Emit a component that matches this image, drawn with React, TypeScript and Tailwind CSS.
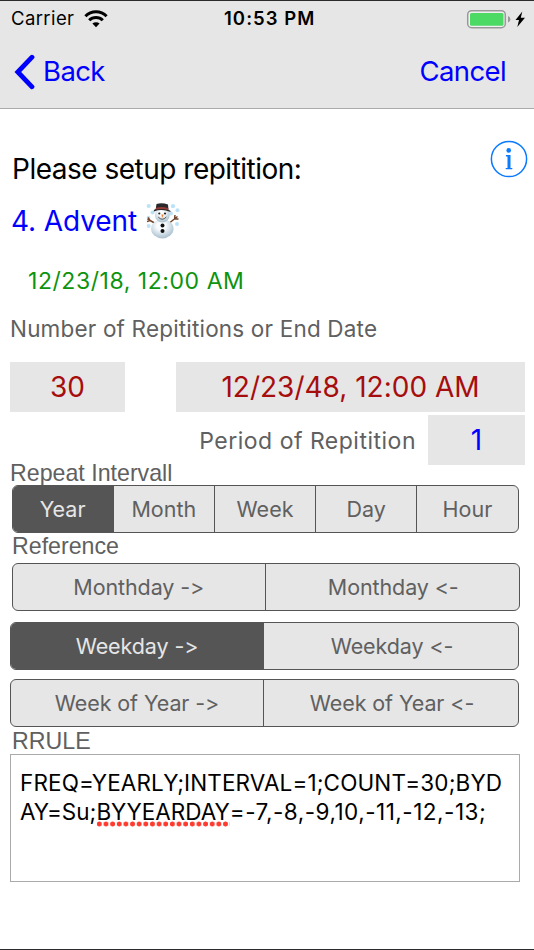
import React from 'react';

const intervals = ['Year', 'Month', 'Week', 'Day', 'Hour'];

const WifiIcon = () => (
  <svg width="24" height="18" viewBox="0 0 24 18" fill="none" stroke="#000" strokeWidth="3">
    <path d="M1.4 6.2 A15 15 0 0 1 22.6 6.2" />
    <path d="M5.2 10.3 A9.6 9.6 0 0 1 18.8 10.3" />
    <path d="M12 17.2 L8.4 13.6 A5.2 5.2 0 0 1 15.6 13.6 Z" fill="#000" stroke="none" />
  </svg>
);

const BatteryIcon = () => (
  <svg width="60" height="20" viewBox="0 0 60 20">
    <rect x="1.7" y="1.7" width="37.6" height="17" rx="4" fill="#f0f0f0" stroke="#999" strokeWidth="1.5" />
    <rect x="4" y="4" width="33.5" height="12.7" rx="1.5" fill="#4cd964" />
    <path d="M42 7 Q44.4 8 44.4 10.2 Q44.4 12.4 42 13.4 Z" fill="#999" />
    <path d="M56.3 2.5 L49.5 11 H53 L51.3 18 L59 8.7 H54.8 Z" fill="#000" />
  </svg>
);

const BackIcon = () => (
  <svg width="21" height="36" viewBox="0 0 21 36" fill="none" stroke="#0000ff" strokeWidth="4.8" strokeLinecap="round" strokeLinejoin="miter">
    <path d="M18 3.2 L3.8 18 L18 32.8" />
  </svg>
);

const InfoIcon = () => (
  <svg width="38" height="38" viewBox="0 0 38 38">
    <circle cx="19" cy="19" r="17.6" fill="none" stroke="#0a7aff" strokeWidth="1.5" />
    <circle cx="18.7" cy="10.4" r="2.3" fill="#0a7aff" />
    <path d="M15.9 15 H20.5 V28 H22.3 V29.2 H15.7 V28 H17.5 V16.4 H15.9 Z" fill="#0a7aff" />
  </svg>
);

const Snowman = () => (
  <svg width="34" height="36" viewBox="0 0 34 36">
    <defs>
      <radialGradient id="snow" cx="45%" cy="35%" r="65%">
        <stop offset="0.3" stopColor="#fafdff" />
        <stop offset="1" stopColor="#a9bfce" />
      </radialGradient>
    </defs>
    <g fill="#bde2f7">
      <circle cx="2.7" cy="3" r="2.1" />
      <circle cx="27" cy="3.2" r="2.1" />
      <circle cx="31.5" cy="7.2" r="2" />
      <circle cx="6.5" cy="9.5" r="2" />
      <circle cx="25" cy="10.5" r="2" />
      <circle cx="2.5" cy="14.5" r="1.8" />
      <circle cx="2.7" cy="23" r="2" />
      <circle cx="31" cy="21" r="2" />
    </g>
    <path d="M8.5 20 L1.5 16 M4 17.5 L2 14.5 M4 17.5 L1 18.5 M24 19.5 L31.5 13.5 M28.5 16 L29 12 M28.5 16 L32.5 16" fill="none" stroke="#74462f" strokeWidth="1.5" />
    <ellipse cx="16.3" cy="25.8" rx="11.2" ry="9.6" fill="url(#snow)" />
    <circle cx="16.3" cy="12" r="7.4" fill="url(#snow)" />
    <path d="M10.5 1 Q16 -0.5 22 1.5 L22.5 7 Q25 7.5 24.5 9 Q16 5.5 8 8.5 Q7 7 9.7 6 Z" fill="#29282b" />
    <path d="M10 4.8 Q16 3 22.3 5.2 V7 Q16 5 10 6.6 Z" fill="#953c35" />
    <circle cx="13.3" cy="10.5" r="1.1" fill="#222" />
    <circle cx="19" cy="10.5" r="1.1" fill="#222" />
    <path d="M15.3 11.5 H17.7 L16.2 15 Z" fill="#ee7b35" />
    <path d="M12.2 14 Q16.3 18.5 20.3 14" fill="none" stroke="#444" strokeWidth="0.9" />
    <circle cx="16.5" cy="22.6" r="2" fill="#111" />
    <circle cx="16.5" cy="28" r="2" fill="#111" />
  </svg>
);

type PairProps = { left: string; right: string; active?: boolean; className: string };

const PairControl = ({ left, right, active, className }: PairProps) => (
  <div className={`flex h-12 shrink-0 overflow-hidden rounded-md border-[1.5px] border-[#555] bg-[#e6e6e6] text-[21.5px] tracking-[-0.1px] text-[#606060] ${className}`}>
    <button className={active ? 'flex-1 border-r border-[#555] bg-[#555] text-[#e6e6e6]' : 'flex-1 border-r border-[#555]'}>
      {left}
    </button>
    <button className="flex-1 pl-[2px]">{right}</button>
  </div>
);

const App = () => {
  return (
    <div className="flex h-[950px] w-[534px] flex-col overflow-hidden whitespace-nowrap border-y border-[#2b2b2e] bg-white font-['Inter',sans-serif] [font-feature-settings:'calt'_0]">
      <header className="flex h-[108px] shrink-0 flex-col border-b border-[#aaa] bg-[#e6e6e6]">
        <div className="flex h-[35px] items-center">
          <div className="flex w-[224px] items-center pl-[11px]">
            <span className="w-[73px] text-[18.5px] tracking-[0.4px]">Carrier</span>
            <WifiIcon />
          </div>
          <span className="flex-1 text-[18.5px] font-semibold tracking-[1.05px]">10:53 PM</span>
          <div className="pr-[8px]">
            <BatteryIcon />
          </div>
        </div>
        <div className="flex h-[71px] items-center justify-between pl-[14px] pr-[28px] text-[27.5px] tracking-[-0.6px] text-[#0000ff]">
          <button className="flex items-center gap-[8px]">
            <BackIcon />
            <span>Back</span>
          </button>
          <button>Cancel</button>
        </div>
      </header>

      <main className="flex flex-1 flex-col">
        <div className="mt-[31px] flex h-[52px] shrink-0 justify-between pl-[12px] pr-[6px]">
          <h1 className="pt-[11px] text-[28px] leading-[36px] tracking-[-0.5px]">Please setup repitition:</h1>
          <InfoIcon />
        </div>
        <div className="flex h-[58px] shrink-0 items-center gap-[9px] pl-[11px] text-[28px] tracking-[-0.1px] text-[#0000ff]">
          <span>4. Advent</span>
          <Snowman />
        </div>
        <p className="h-[55px] shrink-0 pl-[28px] pt-[13px] text-[23px] leading-[36px] tracking-[0.55px] text-[#0d930d]">12/23/18, 12:00 AM</p>
        <p className="h-[57px] shrink-0 pl-[10px] pt-[6px] text-[22.5px] leading-[36px] tracking-[0.18px] text-[#606060]">Number of Repititions or End Date</p>

        <div className="flex h-[50px] shrink-0 justify-between pl-[10px] pr-[9px] text-[28px] leading-[50px] text-[#a60d0d]">
          <div className="w-[115px] bg-[#e6e6e6] text-center">30</div>
          <div className="w-[349px] bg-[#e6e6e6] text-center">12/23/48, 12:00 AM</div>
        </div>
        <div className="mt-[3px] flex h-[50px] shrink-0 justify-end gap-[12px] pr-[9px] leading-[50px]">
          <span className="pt-px text-[23px] leading-[50px] tracking-[0.5px] text-[#606060]">Period of Repitition</span>
          <div className="w-[97px] bg-[#e6e6e6] text-center text-[28px] text-[#0000ff]">1</div>
        </div>

        <h2 className="h-[20px] shrink-0 pl-[10px] font-['Liberation_Sans',sans-serif] text-[23.2px] leading-[17px] text-[#606060]">Repeat Intervall</h2>
        <div className="ml-[11.5px] flex h-12 w-[507px] shrink-0 divide-x divide-[#555] overflow-hidden rounded-md border-[1.5px] border-[#555] bg-[#e6e6e6] text-[21.5px] text-[#606060]">
          {intervals.map((name, i) => (
            <button key={name} className={i === 0 ? 'flex-1 bg-[#555] text-[#e6e6e6]' : 'flex-1'}>
              {name}
            </button>
          ))}
        </div>
        <h2 className="h-[30px] shrink-0 pl-[12px] font-['Liberation_Sans',sans-serif] text-[23.2px] leading-[27px] text-[#606060]">Reference</h2>
        <PairControl left="Monthday ->" right="Monthday <-" className="ml-[12px] w-[508px]" />
        <PairControl left="Weekday ->" right="Weekday <-" active className="ml-[10px] mt-[11px] w-[509px]" />
        <PairControl left="Week of Year ->" right="Week of Year <-" className="ml-[10px] mt-[9px] w-[509px]" />
        <h2 className="h-[27px] shrink-0 pl-[12px] font-['Liberation_Sans',sans-serif] text-[23.2px] leading-[29px] text-[#606060]">RRULE</h2>
        <div className="ml-[10px] h-[128px] w-[510px] shrink-0 border border-[#aaa] pl-[9px] pt-[14px] text-[22.5px] leading-[28.5px] text-black">
          <div className="tracking-[0.12px]">FREQ=YEARLY;INTERVAL=1;COUNT=30;BYD</div>
          <div>
            AY=Su;
            {/* spell checker dots */}
            <span className="bg-[radial-gradient(circle,#ff3b30_2.2px,transparent_2.8px)] bg-[length:6.65px_6px] bg-bottom-left bg-repeat-x pb-[2px]">BYYEARDAY</span>
            <span className="tracking-[0.5px]">=-7,-8,-9,10,-11,-12,-13;</span>
          </div>
        </div>
      </main>
    </div>
  );
};

export default App;
